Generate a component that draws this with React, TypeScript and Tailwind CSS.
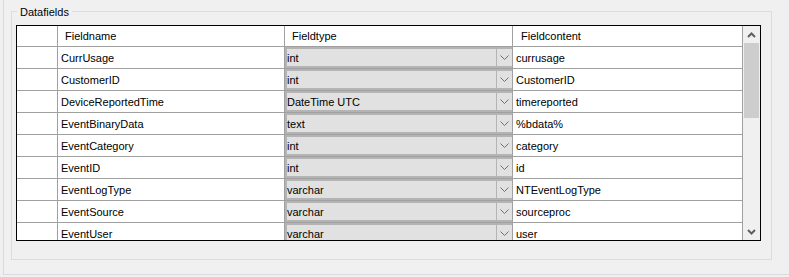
const rows = [
  { name: "CurrUsage", type: "int", content: "currusage" },
  { name: "CustomerID", type: "int", content: "CustomerID" },
  { name: "DeviceReportedTime", type: "DateTime UTC", content: "timereported" },
  { name: "EventBinaryData", type: "text", content: "%bdata%" },
  { name: "EventCategory", type: "int", content: "category" },
  { name: "EventID", type: "int", content: "id" },
  { name: "EventLogType", type: "varchar", content: "NTEventLogType" },
  { name: "EventSource", type: "varchar", content: "sourceproc" },
  { name: "EventUser", type: "varchar", content: "user" },
];

const Chevron = () => (
  <svg width="9" height="5" viewBox="0 0 9 5">
    <path d="M0.5 0.5 L4.5 4.5 L8.5 0.5" fill="none" stroke="#707070" strokeWidth="1" />
  </svg>
);

const Arrow = ({ up = false }: { up?: boolean }) => (
  <svg width="9" height="6" viewBox="0 0 9 6" className={up ? "" : "rotate-180"}>
    <path d="M1 5 L4.5 1.5 L8 5" fill="none" stroke="#606060" strokeWidth="2" />
  </svg>
);

const App = () => {
  return (
    <div className="w-[789px] h-[277px] bg-[#f0f0f0] overflow-hidden font-['Liberation_Sans',Arial,sans-serif] text-[11px] text-black">
      <div className="ml-[3px] h-[275px] border-l border-b border-[#dadada]">
        <div className="relative ml-[7px] pt-[11px]">
          <div className="w-[761px] h-[249px] border border-[#dcdcdc]">
            <span className="absolute left-[6px] top-[5px] bg-[#f0f0f0] px-[3px] leading-[14px]">
              Datafields
            </span>
            <div className="ml-[4px] mt-[13px] w-[745px] h-[216px] border border-black bg-white flex overflow-hidden">
              <div className="w-[726px] flex flex-col">
                <div className="flex h-[21px] shrink-0">
                  <div className="w-[41px] border-r border-b border-[#a0a0a0]" />
                  <div className="w-[227px] border-r border-b border-[#a0a0a0] pl-[7px] flex items-center">
                    Fieldname
                  </div>
                  <div className="w-[228px] border-r border-b border-[#a0a0a0] pl-[7px] flex items-center">
                    Fieldtype
                  </div>
                  <div className="w-[230px] border-r border-b border-[#a0a0a0] pl-[8px] flex items-center">
                    Fieldcontent
                  </div>
                </div>
                {rows.map((r) => (
                  <div key={r.name} className="flex h-[22px] shrink-0">
                    <div className="w-[41px] border-r border-b border-[#a0a0a0]" />
                    <div className="w-[227px] border-r border-b border-[#a0a0a0] pl-[3px] pt-[1px] flex items-center">
                      {r.name}
                    </div>
                    <div className="w-[228px] border-r border-b border-[#a0a0a0] flex">
                      <div className="flex-1 flex bg-[#e1e1e1] border-2 border-[#b4b4b4] border-r-0">
                        <div className="flex-1 flex items-center pt-[1px]">{r.type}</div>
                        <div className="w-[16px] border-l border-[#b4b4b4] flex items-center justify-center">
                          <Chevron />
                        </div>
                      </div>
                    </div>
                    <div className="w-[230px] border-r border-b border-[#a0a0a0] pl-[3px] pt-[1px] flex items-center">
                      {r.content}
                    </div>
                  </div>
                ))}
              </div>
              <div className="w-[17px] bg-[#f0f0f0] flex flex-col">
                <div className="h-[17px] flex items-center justify-center">
                  <Arrow up />
                </div>
                <div className="flex-1">
                  <div className="mx-[1px] h-[75px] bg-[#cdcdcd]" />
                </div>
                <div className="h-[17px] flex items-center justify-center">
                  <Arrow />
                </div>
              </div>
            </div>
          </div>
        </div>
      </div>
    </div>
  );
};

export default App;
